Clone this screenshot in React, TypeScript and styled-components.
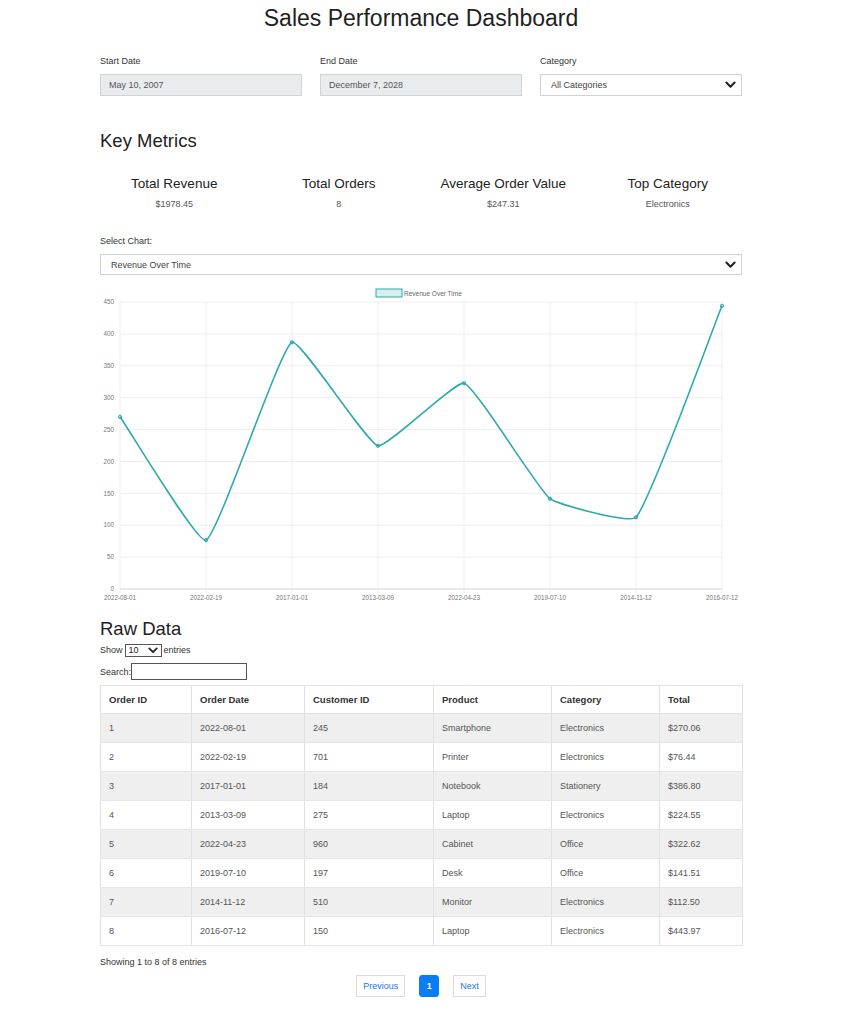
import React from 'react';
import styled, { createGlobalStyle } from 'styled-components';

const GlobalStyle = createGlobalStyle`
  body {
    margin: 0;
    background: #ffffff;
    font-family: 'Liberation Sans', Arial, Helvetica, sans-serif;
    color: #333;
  }
`;

const orders = [
  { id: 1, date: '2022-08-01', customer: 245, product: 'Smartphone', category: 'Electronics', total: 270.06 },
  { id: 2, date: '2022-02-19', customer: 701, product: 'Printer', category: 'Electronics', total: 76.44 },
  { id: 3, date: '2017-01-01', customer: 184, product: 'Notebook', category: 'Stationery', total: 386.8 },
  { id: 4, date: '2013-03-09', customer: 275, product: 'Laptop', category: 'Electronics', total: 224.55 },
  { id: 5, date: '2022-04-23', customer: 960, product: 'Cabinet', category: 'Office', total: 322.62 },
  { id: 6, date: '2019-07-10', customer: 197, product: 'Desk', category: 'Office', total: 141.51 },
  { id: 7, date: '2014-11-12', customer: 510, product: 'Monitor', category: 'Electronics', total: 112.5 },
  { id: 8, date: '2016-07-12', customer: 150, product: 'Laptop', category: 'Electronics', total: 443.97 },
];

const metrics = [
  { title: 'Total Revenue', value: '$1978.45' },
  { title: 'Total Orders', value: '8' },
  { title: 'Average Order Value', value: '$247.31' },
  { title: 'Top Category', value: 'Electronics' },
];

const columns = [
  { label: 'Order ID', width: 91 },
  { label: 'Order Date', width: 113 },
  { label: 'Customer ID', width: 129 },
  { label: 'Product', width: 118 },
  { label: 'Category', width: 108 },
  { label: 'Total', width: 83 },
];

const Chevron = ({ size = 11 }: { size?: number }) => (
  <svg width={size} height={size * 0.7} viewBox="0 0 12 8">
    <path d="M1.5 1.5 L6 6 L10.5 1.5" fill="none" stroke="#222" strokeWidth="2.2" strokeLinecap="round" strokeLinejoin="round" />
  </svg>
);

// chart.js style spline
const TEAL = 'rgb(46, 170, 170)';
const PLOT_LEFT = 20;
const STEP = 86;
const PLOT_TOP = 17;
const PLOT_BOTTOM = 304;
const MAX = 450;
const toY = (v: number) => PLOT_BOTTOM - (v * (PLOT_BOTTOM - PLOT_TOP)) / MAX;

const buildPath = (pts: { x: number; y: number }[], tension: number) => {
  let d = `M${pts[0].x} ${pts[0].y}`;
  const cps = pts.map((cur, i) => {
    const prev = pts[i - 1] || cur;
    const next = pts[i + 1] || cur;
    const d01 = Math.hypot(cur.x - prev.x, cur.y - prev.y);
    const d12 = Math.hypot(next.x - cur.x, next.y - cur.y);
    const sum = d01 + d12 || 1;
    const fa = (tension * d01) / sum;
    const fb = (tension * d12) / sum;
    return {
      before: { x: cur.x - fa * (next.x - prev.x), y: cur.y - fa * (next.y - prev.y) },
      after: { x: cur.x + fb * (next.x - prev.x), y: cur.y + fb * (next.y - prev.y) },
    };
  });
  for (let i = 1; i < pts.length; i++) {
    const a = cps[i - 1].after;
    const b = cps[i].before;
    d += ` C${a.x.toFixed(1)} ${a.y.toFixed(1)} ${b.x.toFixed(1)} ${b.y.toFixed(1)} ${pts[i].x} ${pts[i].y.toFixed(1)}`;
  }
  return d;
};

const RevenueChart = () => {
  const pts = orders.map((o, i) => ({ x: PLOT_LEFT + STEP * i, y: toY(o.total) }));
  const ticks = [0, 50, 100, 150, 200, 250, 300, 350, 400, 450];
  return (
    <ChartSvg width="642" height="322" viewBox="0 0 642 322">
      <rect x="276" y="4" width="26" height="8" fill="rgba(46,170,170,0.2)" stroke={TEAL} strokeWidth="1" />
      <text x="304" y="11" fontSize="6.5" fill="#666">Revenue Over Time</text>
      {ticks.map((t) => (
        <g key={t}>
          <line x1={PLOT_LEFT} x2={PLOT_LEFT + STEP * 7} y1={toY(t)} y2={toY(t)} stroke="#efefef" strokeWidth="1" />
          <text x="14" y={toY(t) + 2.2} fontSize="6.3" fill="#777" textAnchor="end">{t}</text>
        </g>
      ))}
      {orders.map((o, i) => (
        <g key={o.id}>
          <line x1={PLOT_LEFT + STEP * i} x2={PLOT_LEFT + STEP * i} y1={PLOT_TOP} y2={PLOT_BOTTOM + 4} stroke="#efefef" strokeWidth="1" />
          <text x={PLOT_LEFT + STEP * i} y="315" fontSize="6.3" fill="#777" textAnchor="middle">{o.date}</text>
        </g>
      ))}
      <line x1={PLOT_LEFT} x2={PLOT_LEFT + STEP * 7} y1={PLOT_BOTTOM} y2={PLOT_BOTTOM} stroke="#dcdcdc" strokeWidth="1" />
      <path d={buildPath(pts, 0.12)} fill="none" stroke={TEAL} strokeWidth="1.6" />
      {pts.map((p, i) => (
        <circle key={i} cx={p.x} cy={p.y} r="1.6" fill="rgba(46,170,170,0.3)" stroke={TEAL} strokeWidth="1" />
      ))}
    </ChartSvg>
  );
};

const App = () => {
  return (
    <>
      <GlobalStyle />
      <Page>
        <Title>Sales Performance Dashboard</Title>

        <FilterRow>
          <Field>
            <FieldLabel>Start Date</FieldLabel>
            <DateBox>May 10, 2007</DateBox>
          </Field>
          <Field>
            <FieldLabel>End Date</FieldLabel>
            <DateBox>December 7, 2028</DateBox>
          </Field>
          <Field>
            <FieldLabel>Category</FieldLabel>
            <SelectBox>
              <span>All Categories</span>
              <Chevron />
            </SelectBox>
          </Field>
        </FilterRow>

        <SectionTitle $top={34}>Key Metrics</SectionTitle>
        <MetricGrid>
          {metrics.map((m) => (
            <Metric key={m.title}>
              <MetricTitle>{m.title}</MetricTitle>
              <MetricValue>{m.value}</MetricValue>
            </Metric>
          ))}
        </MetricGrid>

        <ChartLabel>Select Chart:</ChartLabel>
        <SelectBox $height={21}>
          <span>Revenue Over Time</span>
          <Chevron />
        </SelectBox>

        <RevenueChart />

        <SectionTitle $top={11}>Raw Data</SectionTitle>
        <EntriesRow>
          Show
          <EntriesSelect>
            <span>10</span>
            <Chevron size={10} />
          </EntriesSelect>
          entries
        </EntriesRow>
        <SearchRow>
          Search:
          <SearchInput />
        </SearchRow>

        <Table>
          <thead>
            <tr>
              {columns.map((c) => (
                <Th key={c.label} $width={c.width}>{c.label}</Th>
              ))}
            </tr>
          </thead>
          <tbody>
            {orders.map((o, i) => (
              <Row key={o.id} $striped={i % 2 === 0}>
                <Td>{o.id}</Td>
                <Td>{o.date}</Td>
                <Td>{o.customer}</Td>
                <Td>{o.product}</Td>
                <Td>{o.category}</Td>
                <Td>${o.total.toFixed(2)}</Td>
              </Row>
            ))}
          </tbody>
        </Table>

        <InfoText>Showing 1 to 8 of 8 entries</InfoText>
        <Pagination>
          <PageButton>Previous</PageButton>
          <PageButton $active>1</PageButton>
          <PageButton>Next</PageButton>
        </Pagination>
      </Page>
    </>
  );
};

export default App;

const Page = styled.div`
  width: 642px;
  margin-left: 100px;
  padding-bottom: 30px;
`;

const Title = styled.h1`
  margin: 0;
  padding-top: 5px;
  font-size: 23px;
  line-height: 27px;
  font-weight: normal;
  text-align: center;
  color: #1f1f1f;
`;

const FilterRow = styled.div`
  display: grid;
  grid-template-columns: repeat(3, 1fr);
  gap: 18px;
  margin-top: 23px;
`;

const Field = styled.div`
  display: flex;
  flex-direction: column;
`;

const FieldLabel = styled.div`
  font-size: 9px;
  line-height: 12px;
  margin-bottom: 7px;
  color: #333;
`;

const DateBox = styled.div`
  box-sizing: border-box;
  height: 22px;
  display: flex;
  align-items: center;
  padding: 0 8px;
  font-size: 9px;
  color: #555;
  background: #e9ecef;
  border: 1px solid #cfd3d7;
`;

const SelectBox = styled.div<{ $height?: number }>`
  box-sizing: border-box;
  height: ${(p) => p.$height || 22}px;
  display: flex;
  align-items: center;
  justify-content: space-between;
  padding: 0 5px 0 10px;
  font-size: 9px;
  color: #444;
  background: #fff;
  border: 1px solid #cfd3d7;
`;

const SectionTitle = styled.h2<{ $top: number }>`
  margin: ${(p) => p.$top}px 0 0;
  font-size: 18.5px;
  line-height: 22px;
  font-weight: normal;
  color: #222;
`;

const MetricGrid = styled.div`
  display: grid;
  grid-template-columns: repeat(4, 1fr);
  gap: 16px;
  margin-top: 24px;
`;

const Metric = styled.div`
  text-align: center;
`;

const MetricTitle = styled.div`
  font-size: 13.5px;
  line-height: 16px;
  color: #222;
`;

const MetricValue = styled.div`
  margin-top: 6px;
  font-size: 9px;
  line-height: 12px;
  color: #555;
`;

const ChartLabel = styled.div`
  margin-top: 25px;
  margin-bottom: 7px;
  font-size: 9px;
  line-height: 12px;
  color: #333;
`;

const ChartSvg = styled.svg`
  display: block;
  margin-top: 10px;
  font-family: 'Liberation Sans', Arial, sans-serif;
`;

const EntriesRow = styled.div`
  display: flex;
  align-items: center;
  gap: 2px;
  margin-top: 3px;
  font-size: 9px;
  line-height: 14px;
  color: #333;
`;

const EntriesSelect = styled.div`
  box-sizing: border-box;
  width: 37px;
  height: 13px;
  display: flex;
  align-items: center;
  justify-content: space-between;
  padding: 0 3px 0 3px;
  border: 1px solid #555;
  font-size: 9px;
  color: #222;
`;

const SearchRow = styled.div`
  display: flex;
  align-items: center;
  margin-top: 6px;
  font-size: 9px;
  color: #333;
`;

const SearchInput = styled.div`
  box-sizing: border-box;
  width: 116px;
  height: 17px;
  border: 1px solid #555;
  background: #fff;
`;

const Table = styled.table`
  margin-top: 5px;
  width: 642px;
  table-layout: fixed;
  border-collapse: collapse;
  border: 1px solid #e2e2e2;
  font-size: 9px;
`;

const Th = styled.th<{ $width: number }>`
  width: ${(p) => p.$width}px;
  box-sizing: border-box;
  height: 28px;
  padding: 0 8px;
  text-align: left;
  font-size: 9.5px;
  font-weight: bold;
  color: #333;
  border-left: 1px solid #e2e2e2;
  border-bottom: 1px solid #e2e2e2;
`;

const Row = styled.tr<{ $striped: boolean }>`
  height: 29px;
  background: ${(p) => (p.$striped ? '#efefef' : '#ffffff')};
`;

const Td = styled.td`
  padding: 0 8px;
  color: #555;
  border-left: 1px solid #e2e2e2;
  border-bottom: 1px solid #e6e6e6;
`;

const InfoText = styled.div`
  margin-top: 10px;
  font-size: 9px;
  line-height: 12px;
  color: #333;
`;

const Pagination = styled.div`
  display: flex;
  justify-content: center;
  gap: 14px;
  margin-top: 7px;
`;

const PageButton = styled.div<{ $active?: boolean }>`
  box-sizing: border-box;
  height: 22px;
  min-width: 20px;
  padding: 0 6px;
  display: flex;
  align-items: center;
  justify-content: center;
  font-size: 9px;
  color: ${(p) => (p.$active ? '#fff' : '#1a73e8')};
  background: ${(p) => (p.$active ? '#0a7cf5' : '#fff')};
  border: 1px solid ${(p) => (p.$active ? '#0a7cf5' : '#dcdcdc')};
  border-radius: ${(p) => (p.$active ? '3px' : '0')};
  font-weight: ${(p) => (p.$active ? 'bold' : 'normal')};
`;
